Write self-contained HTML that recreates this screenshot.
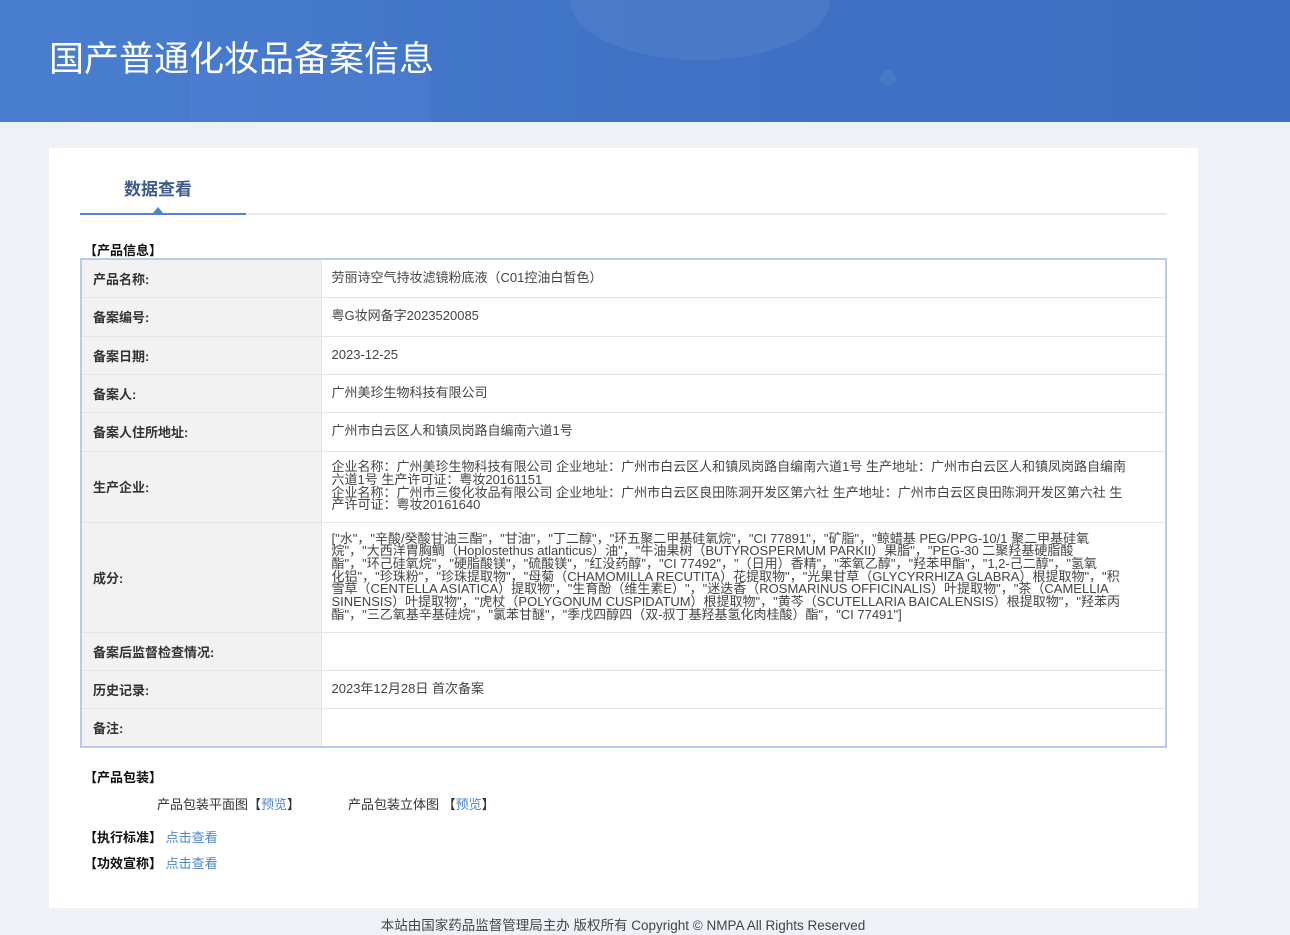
<!DOCTYPE html>
<html><head><meta charset="utf-8"><style>
*{margin:0;padding:0;box-sizing:border-box}
body{width:1290px;height:935px;background:#eef2f6;font-family:"Liberation Sans","Noto Sans CJK SC",sans-serif;position:relative;overflow:hidden;color:#333}
.hd{position:absolute;left:0;top:0;width:1290px;height:122px;background:linear-gradient(90deg,#4a7fcf 0%,#3f72c4 50%,#3d6fc2 100%);overflow:hidden}
.hd h1{position:absolute;left:49px;top:31px;font-size:35px;color:#fff;font-weight:normal;font-family:"Noto Sans CJK SC",sans-serif}
.hd .c{position:absolute;border-radius:50%;background:rgba(255,255,255,.06)}
.card{position:absolute;left:49px;top:148px;width:1149px;height:760px;background:#fff}
.tab{position:absolute;left:124px;top:175px;font-size:17px;font-weight:bold;color:#3c5a8c}
.tl{position:absolute;left:80px;top:213px;width:1087px;height:2px;background:#e6e9ee}
.ta{position:absolute;left:80px;top:213px;width:166px;height:2px;background:#4a86c8}
.tri{position:absolute;left:153px;top:207px;border:5px solid transparent;border-bottom:6px solid #4a86c8;border-top:0}
.sec{position:absolute;font-size:13px;font-weight:bold;color:#111}
table{position:absolute;left:80px;top:258px;width:1087px;border-collapse:collapse;border:2px solid #b9cbe6;font-size:13px}
td{border:1px solid #e2e5ea;vertical-align:middle}
td.l{width:240px;background:#f2f2f2;font-weight:bold;padding-left:11px;color:#333;font-size:13px}
td.v{padding-left:10px;color:#444;line-height:12.7px}
a{color:#4a86c8;text-decoration:none}
.ft{position:absolute;top:914px;left:0;width:1246px;text-align:center;font-size:13.5px;color:#444}
</style></head><body>
<div class="hd"><div class="c" style="left:190px;top:70px;width:240px;height:240px;border-radius:0;background:rgba(90,130,220,.25)"></div><div class="c" style="left:570px;top:-60px;width:260px;height:120px"></div><div class="c" style="left:880px;top:70px;width:16px;height:16px"></div><h1>国产普通化妆品备案信息</h1></div>
<div class="card"></div>
<div class="tab">数据查看</div>
<div class="tl"></div><div class="ta"></div><div class="tri"></div>
<div class="sec" style="left:84px;top:240px">【产品信息】</div>
<table>
<tr style="height:38px"><td class="l">产品名称:</td><td class="v">劳丽诗空气持妆滤镜粉底液（C01控油白皙色）</td></tr>
<tr style="height:39px"><td class="l">备案编号:</td><td class="v">粤G妆网备字2023520085</td></tr>
<tr style="height:38px"><td class="l">备案日期:</td><td class="v">2023-12-25</td></tr>
<tr style="height:38px"><td class="l">备案人:</td><td class="v">广州美珍生物科技有限公司</td></tr>
<tr style="height:39px"><td class="l">备案人住所地址:</td><td class="v">广州市白云区人和镇凤岗路自编南六道1号</td></tr>
<tr style="height:71px"><td class="l">生产企业:</td><td class="v">企业名称：广州美珍生物科技有限公司 企业地址：广州市白云区人和镇凤岗路自编南六道1号 生产地址：广州市白云区人和镇凤岗路自编南<br>六道1号 生产许可证：粤妆20161151<br>企业名称：广州市三俊化妆品有限公司 企业地址：广州市白云区良田陈洞开发区第六社 生产地址：广州市白云区良田陈洞开发区第六社 生<br>产许可证：粤妆20161640</td></tr>
<tr style="height:110px"><td class="l">成分:</td><td class="v">["水"，"辛酸/癸酸甘油三酯"，"甘油"，"丁二醇"，"环五聚二甲基硅氧烷"，"CI 77891"，"矿脂"，"鲸蜡基 PEG/PPG-10/1 聚二甲基硅氧<br>烷"，"大西洋胄胸鲷（Hoplostethus atlanticus）油"，"牛油果树（BUTYROSPERMUM PARKII）果脂"，"PEG-30 二聚羟基硬脂酸<br>酯"，"环己硅氧烷"，"硬脂酸镁"，"硫酸镁"，"红没药醇"，"CI 77492"，"（日用）香精"，"苯氧乙醇"，"羟苯甲酯"，"1,2-己二醇"，"氢氧<br>化铝"，"珍珠粉"，"珍珠提取物"，"母菊（CHAMOMILLA RECUTITA）花提取物"，"光果甘草（GLYCYRRHIZA GLABRA）根提取物"，"积<br>雪草（CENTELLA ASIATICA）提取物"，"生育酚（维生素E）"，"迷迭香（ROSMARINUS OFFICINALIS）叶提取物"，"茶（CAMELLIA<br>SINENSIS）叶提取物"，"虎杖（POLYGONUM CUSPIDATUM）根提取物"，"黄芩（SCUTELLARIA BAICALENSIS）根提取物"，"羟苯丙<br>酯"，"三乙氧基辛基硅烷"，"氯苯甘醚"，"季戊四醇四（双-叔丁基羟基氢化肉桂酸）酯"，"CI 77491"]</td></tr>
<tr style="height:38px"><td class="l">备案后监督检查情况:</td><td class="v"></td></tr>
<tr style="height:38px"><td class="l">历史记录:</td><td class="v">2023年12月28日 首次备案</td></tr>
<tr style="height:39px"><td class="l">备注:</td><td class="v"></td></tr>
</table>
<div class="sec" style="left:84px;top:767px">【产品包装】</div>
<div style="position:absolute;left:157px;top:794px;font-size:13px;color:#333">产品包装平面图【<a>预览</a>】</div>
<div style="position:absolute;left:348px;top:794px;font-size:13px;color:#333">产品包装立体图 【<a>预览</a>】</div>
<div style="position:absolute;left:84px;top:827px;font-size:13px"><b style="color:#111">【执行标准】</b> <a>点击查看</a></div>
<div style="position:absolute;left:84px;top:853px;font-size:13px"><b style="color:#111">【功效宣称】</b> <a>点击查看</a></div>
<div class="ft">本站由国家药品监督管理局主办 版权所有 Copyright © NMPA All Rights Reserved</div>
</body></html>
